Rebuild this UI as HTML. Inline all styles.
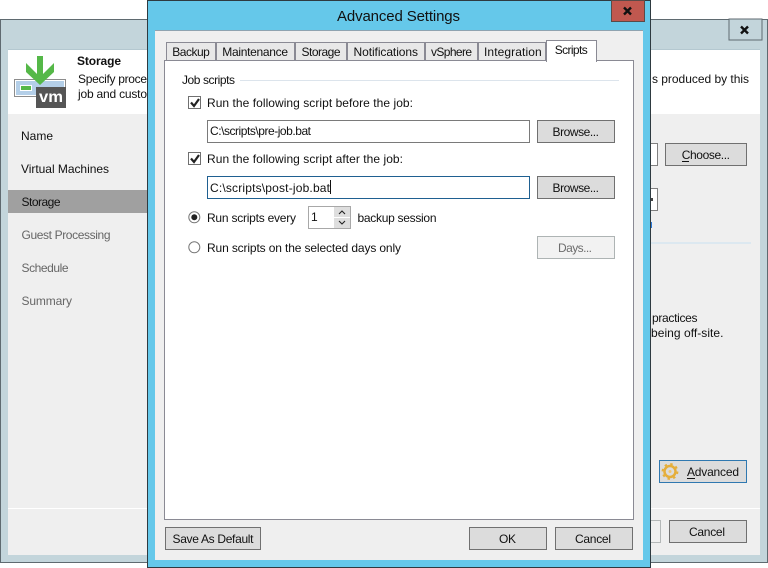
<!DOCTYPE html>
<html><head><meta charset="utf-8"><style>
html,body{margin:0;padding:0;background:#fff;width:768px;height:568px;overflow:hidden}
svg{display:block}
text{font-family:"Liberation Sans",sans-serif;font-size:12px;fill:#111;white-space:pre}
rect,line{shape-rendering:crispEdges}
</style></head><body>
<svg width="768" height="568" viewBox="0 0 768 568" xmlns="http://www.w3.org/2000/svg">
<!-- back window -->
<rect x="0" y="19" width="768" height="544" fill="#5f6a70"/>
<rect x="1" y="20" width="766" height="542" fill="#c3d5db"/>
<rect x="8" y="50" width="752" height="505" fill="#efefef"/>
<rect x="8" y="50" width="752" height="64" fill="#fff"/>
<rect x="8" y="49" width="752" height="1" fill="#b4c8d0"/>
<rect x="729" y="19" width="33" height="21" fill="#c3d5db" stroke="#5f6a70" stroke-width="1"/>
<path d="M741 26.500l7 7m0-7l-7 7" stroke="#111" stroke-width="2.400" fill="none"/>
<!-- icon -->
<rect x="14.500" y="79.500" width="51" height="17" fill="#fff" stroke="#8c8c8c"/>
<rect x="16" y="81" width="48" height="14" fill="#b4cfe8"/>
<rect x="20" y="85" width="12" height="6" fill="#fff"/>
<rect x="21" y="86" width="10" height="4" fill="#55b848"/>
<polygon points="26,63 26,72 40,85 54,72 54,63 43,74 43,56 37,56 37,74" fill="#55b848"/>
<rect x="36" y="87" width="30" height="21" fill="#555"/>
<text x="39" y="102" textLength="24" lengthAdjust="spacingAndGlyphs" style="font-size:16px;font-weight:bold;fill:#fff">vm</text>
<text x="77" y="65" textLength="44" style="font-weight:bold">Storage</text>
<text x="78" y="83" textLength="69">Specify proce</text>
<text x="78" y="98" textLength="69">job and custo</text>
<text x="652" y="83" textLength="97">s produced by this</text>
<!-- sidebar -->
<text x="21" y="140" textLength="32">Name</text>
<text x="21" y="173" textLength="88">Virtual Machines</text>
<rect x="8" y="190" width="139" height="23" fill="#a0a0a0"/>
<text x="21.500" y="206" textLength="39">Storage</text>
<text x="21.500" y="239" textLength="89" style="fill:#666">Guest Processing</text>
<text x="21.500" y="272" textLength="47" style="fill:#666">Schedule</text>
<text x="21.500" y="305" textLength="50.500" style="fill:#666">Summary</text>
<!-- back right -->
<rect x="640.500" y="143.500" width="17" height="22" fill="#fff" stroke="#808080"/>
<rect x="665.500" y="143.500" width="81" height="22" fill="#dcdcdc" stroke="#707070"/>
<text x="681.700" y="159" textLength="48.300">Choose...</text>
<rect x="682" y="161" width="7" height="1" fill="#111"/>
<rect x="640.500" y="188.500" width="17" height="22" fill="#fff" stroke="#808080"/>
<rect x="651" y="198" width="2" height="3" fill="#444"/>
<rect x="651" y="222" width="1" height="6" fill="#2a78d8"/>
<rect x="650" y="242" width="101" height="2" fill="#dce8f0"/>
<text x="652" y="322" textLength="45.500">practices</text>
<text x="651" y="337" textLength="72.500">being off-site.</text>
<rect x="659.500" y="460.500" width="87" height="22" fill="#dcdcdc" stroke="#2f78b0"/>
<circle cx="670" cy="471.500" r="5.500" fill="none" stroke="#e5ae3a" stroke-width="2.500"/>
<circle cx="670" cy="471.500" r="7.500" fill="none" stroke="#e5ae3a" stroke-width="1.800" stroke-dasharray="2.500 3.390"/>
<circle cx="670" cy="471.500" r="1.500" fill="#f0c870"/>
<text x="687" y="476" textLength="52">Advanced</text>
<rect x="687" y="478" width="8" height="1" fill="#111"/>
<rect x="8" y="508" width="752" height="1" fill="#fff"/>
<rect x="640.500" y="520.500" width="20" height="22" fill="#f0f0f0" stroke="#b4b8b8"/>
<rect x="669.500" y="520.500" width="77" height="22" fill="#dcdcdc" stroke="#707070"/>
<text x="689" y="536" textLength="36">Cancel</text>

<!-- dialog -->
<rect x="147" y="0" width="504" height="568" fill="#2e3a40"/>
<rect x="148" y="1" width="502" height="566" fill="#65c8ea"/>
<rect x="155" y="31" width="488" height="529" fill="#efefef"/>
<rect x="155" y="30" width="488" height="1" fill="#8fa3b0"/>
<rect x="611.500" y="0.500" width="33" height="21" fill="#c0584f" stroke="#5a4a48"/>
<path d="M624 7.500l7 7m0-7l-7 7" stroke="#111" stroke-width="2.400" fill="none"/>
<text x="337" y="21" textLength="123" style="font-size:15px">Advanced Settings</text>
<!-- tab pane -->
<rect x="164.500" y="60.500" width="469" height="459" fill="#fff" stroke="#8a8a94"/>
<rect x="166.500" y="42.500" width="49" height="18" fill="#e8e8e8" stroke="#8a8a94"/>
<rect x="216.500" y="42.500" width="78" height="18" fill="#e8e8e8" stroke="#8a8a94"/>
<rect x="295.500" y="42.500" width="51" height="18" fill="#e8e8e8" stroke="#8a8a94"/>
<rect x="347.500" y="42.500" width="77" height="18" fill="#e8e8e8" stroke="#8a8a94"/>
<rect x="425.500" y="42.500" width="52" height="18" fill="#e8e8e8" stroke="#8a8a94"/>
<rect x="478.500" y="42.500" width="67" height="18" fill="#e8e8e8" stroke="#8a8a94"/>
<rect x="546.500" y="40.500" width="50" height="21" fill="#fff" stroke="#8a8a94"/>
<rect x="547" y="58" width="49" height="5" fill="#fff"/>
<text x="172.300" y="56" textLength="37.500">Backup</text>
<text x="222.300" y="56" textLength="65.700">Maintenance</text>
<text x="301.500" y="56" textLength="39">Storage</text>
<text x="353.500" y="56" textLength="64.500">Notifications</text>
<text x="431" y="56" textLength="41">vSphere</text>
<text x="484" y="56" textLength="57.700">Integration</text>
<text x="554.700" y="54" textLength="33">Scripts</text>
<!-- job scripts -->
<text x="182" y="84" textLength="53">Job scripts</text>
<rect x="240" y="80" width="379" height="1" fill="#dce4ec"/>
<rect x="188.500" y="96.500" width="12" height="12" fill="#fff" stroke="#707070"/>
<path d="M191 102.500l3 3.500l5-7" fill="none" stroke="#222" stroke-width="2.200"/>
<text x="207" y="107" textLength="206">Run the following script before the job:</text>
<rect x="207.500" y="120.500" width="322" height="22" fill="#fff" stroke="#7a7a7a"/>
<text x="210" y="135" textLength="101">C:\scripts\pre-job.bat</text>
<rect x="537.500" y="120.500" width="77" height="22" fill="#dcdcdc" stroke="#707070"/>
<text x="552.500" y="136" textLength="46.500">Browse...</text>
<rect x="188.500" y="152.500" width="12" height="12" fill="#fff" stroke="#707070"/>
<path d="M191 158.500l3 3.500l5-7" fill="none" stroke="#222" stroke-width="2.200"/>
<text x="207" y="163" textLength="196">Run the following script after the job:</text>
<rect x="207.500" y="176.500" width="322" height="22" fill="#fff" stroke="#1f6091"/>
<text x="210" y="192" textLength="120">C:\scripts\post-job.bat</text>
<rect x="330" y="180" width="1" height="14" fill="#111"/>
<rect x="537.500" y="176.500" width="77" height="22" fill="#dcdcdc" stroke="#707070"/>
<text x="552.500" y="192" textLength="46.500">Browse...</text>
<circle cx="194.300" cy="217.300" r="5.500" fill="#fff" stroke="#777"/>
<circle cx="194.300" cy="217.300" r="3" fill="#222"/>
<text x="207" y="222" textLength="89">Run scripts every</text>
<rect x="308.500" y="206.500" width="42" height="22" fill="#fff" stroke="#a8a8a8"/>
<rect x="334" y="207" width="16" height="10" fill="#dedede"/>
<rect x="334" y="218" width="16" height="10" fill="#dedede"/>
<path d="M339 214l3-3l3 3M339 221l3 3l3-3" fill="none" stroke="#222" stroke-width="1.100"/>
<text x="311" y="221">1</text>
<text x="357.500" y="222" textLength="79">backup session</text>
<circle cx="194.300" cy="247.300" r="5.500" fill="#fff" stroke="#777"/>
<text x="207" y="252" textLength="194">Run scripts on the selected days only</text>
<rect x="537.500" y="236.500" width="77" height="22" fill="#f2f2f2" stroke="#aeb4b4"/>
<text x="558" y="252" textLength="34" style="fill:#6d6d6d">Days...</text>
<!-- footer buttons -->
<rect x="165.500" y="527.500" width="95" height="22" fill="#dcdcdc" stroke="#707070"/>
<text x="172.500" y="543" textLength="81">Save As Default</text>
<rect x="469.500" y="527.500" width="77" height="22" fill="#dcdcdc" stroke="#707070"/>
<text x="499" y="543" textLength="17">OK</text>
<rect x="555.500" y="527.500" width="77" height="22" fill="#dcdcdc" stroke="#707070"/>
<text x="575" y="543" textLength="36">Cancel</text>
</svg>
</body></html>
